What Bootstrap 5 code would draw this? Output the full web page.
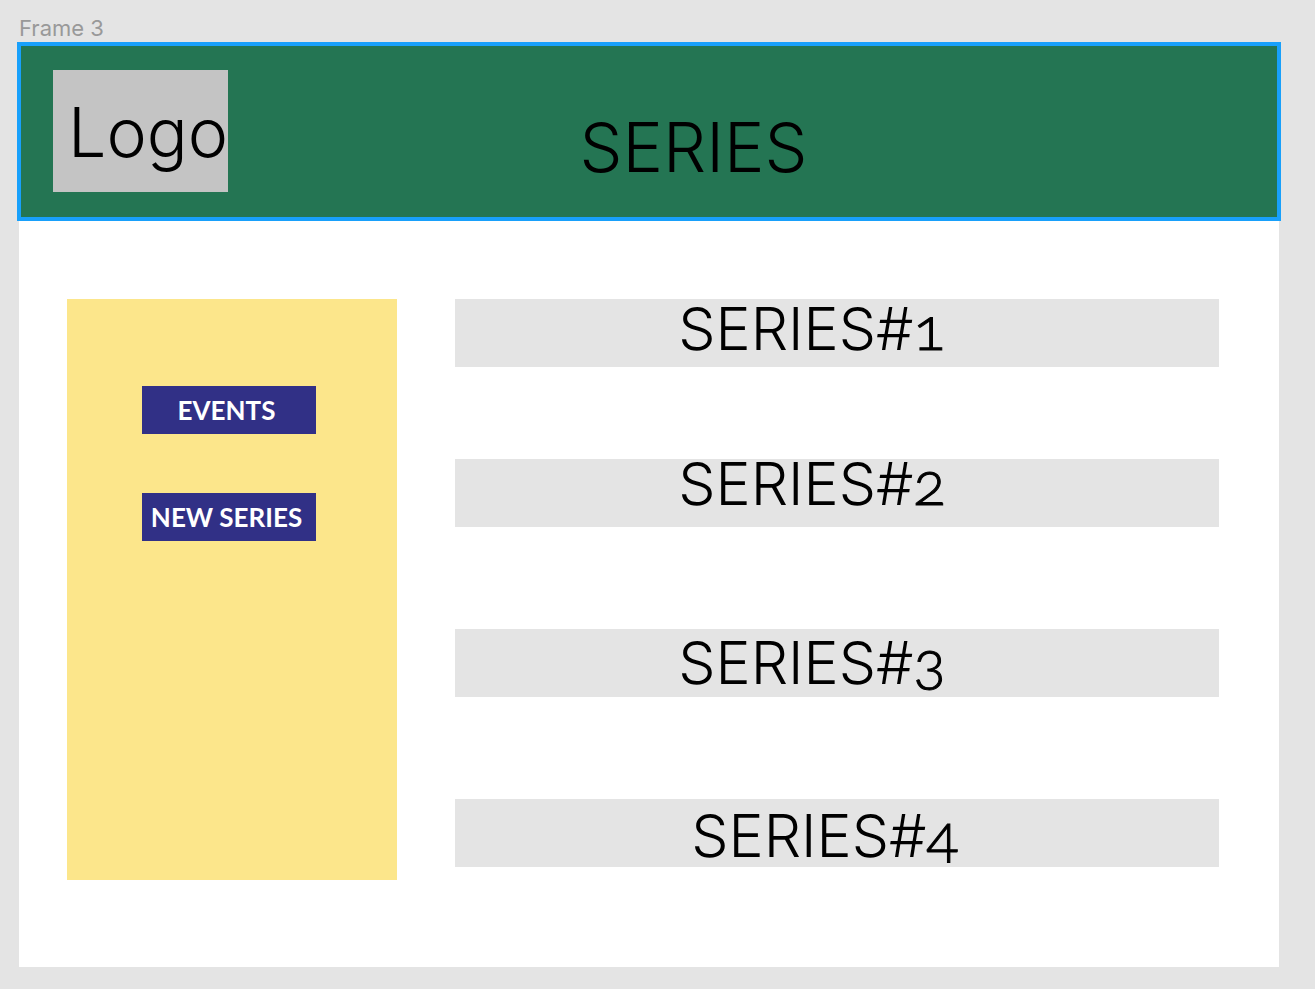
<!DOCTYPE html>
<html lang="en">
<head>
<meta charset="utf-8">
<meta name="viewport" content="width=device-width, initial-scale=1">
<title>Series</title>
<link href="https://cdn.jsdelivr.net/npm/bootstrap@5.3.0/dist/css/bootstrap.min.css" rel="stylesheet">
<style>
body { background: #e4e4e4; color: #000; font-family: Inter, sans-serif; }
.canvas { padding: 12px 36px 22px 19px; }
.frame-label { font-size: 22px; line-height: 32px; color: #999; }
.frame { min-height: calc(100vh - 66px); }
.site-header { min-height: 175px; padding: 26px 34px; background: #247553; outline: 4px solid #18a0fb; outline-offset: -2px; }
.logo { width: 175px; height: 122px; padding-left: 15px; background: #c4c4c4; color: #000; font-size: 68px; font-weight: 300; line-height: 124px; }
.page-title { font-size: 68px; font-weight: 300; line-height: 78px; padding: 38px 86px 0 0; }
.layout { display: grid; grid-template-columns: 330fr 764fr; column-gap: 58px; padding: 80px 60px 87px 48px; }
.side { min-height: 581px; padding: 87px 6px 0 0; gap: 59px; background: #fce68b; }
.side .btn { width: 174px; height: 48px; padding: 0 5px 0 0; background: #313086; color: #fff; font-family: Lato, sans-serif; font-size: 26px; font-weight: 700; line-height: 46px; }
.series { gap: 102px; }
.series-item { height: 68px; padding-right: 50px; background: #e4e4e4; color: #000; font-size: 59px; font-weight: 300; line-height: 60px; }
.series-item span { font-family: Lato, sans-serif; font-size: 60px; line-height: 1px; font-variant-numeric: oldstyle-nums; -webkit-text-stroke: 1px #000; }
.raised { margin-bottom: -10px; }
.high { line-height: 50px; }
.low { line-height: 68px; }
.lowest { line-height: 74px; padding-right: 24px; }
</style>
</head>
<body>
<div class="canvas">
  <div class="frame-label">Frame 3</div>
  <div class="frame bg-white">
    <header class="site-header d-flex">
      <a href="#" class="logo flex-shrink-0 text-decoration-none text-nowrap">Logo</a>
      <h1 class="page-title flex-grow-1 text-center mb-0">SERIES</h1>
    </header>
    <div class="layout">
      <aside class="side d-flex flex-column align-items-center">
        <button type="button" class="btn border-0 rounded-0 text-nowrap">EVENTS</button>
        <button type="button" class="btn border-0 rounded-0 text-nowrap">NEW SERIES</button>
      </aside>
      <main class="series d-flex flex-column">
        <a href="#" class="series-item raised d-block text-center text-decoration-none text-nowrap">SERIES#<span>1</span></a>
        <a href="#" class="series-item high d-block text-center text-decoration-none text-nowrap">SERIES#<span>2</span></a>
        <a href="#" class="series-item low d-block text-center text-decoration-none text-nowrap">SERIES#<span>3</span></a>
        <a href="#" class="series-item lowest d-block text-center text-decoration-none text-nowrap">SERIES#<span>4</span></a>
      </main>
    </div>
  </div>
</div>
<script src="https://cdn.jsdelivr.net/npm/bootstrap@5.3.0/dist/js/bootstrap.bundle.min.js"></script>
</body>
</html>
